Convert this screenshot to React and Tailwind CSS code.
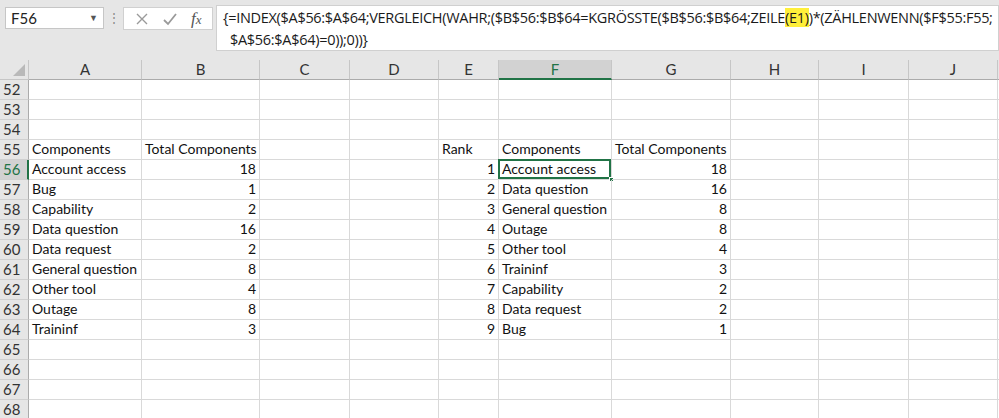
import React from 'react';

const cols = [
  { k: 'A', w: 'w-[113px]' },
  { k: 'B', w: 'w-[118px]' },
  { k: 'C', w: 'w-[90px]' },
  { k: 'D', w: 'w-[89px]' },
  { k: 'E', w: 'w-[60px]' },
  { k: 'F', w: 'w-[113px]' },
  { k: 'G', w: 'w-[119px]' },
  { k: 'H', w: 'w-[88px]' },
  { k: 'I', w: 'w-[90px]' },
  { k: 'J', w: 'w-[89px]' },
];

// cell values per row
const data = {
  55: { A: 'Components', B: 'Total Components', E: 'Rank', F: 'Components', G: 'Total Components' },
  56: { A: 'Account access', B: 18, E: 1, F: 'Account access', G: 18 },
  57: { A: 'Bug', B: 1, E: 2, F: 'Data question', G: 16 },
  58: { A: 'Capability', B: 2, E: 3, F: 'General question', G: 8 },
  59: { A: 'Data question', B: 16, E: 4, F: 'Outage', G: 8 },
  60: { A: 'Data request', B: 2, E: 5, F: 'Other tool', G: 4 },
  61: { A: 'General question', B: 8, E: 6, F: 'Traininf', G: 3 },
  62: { A: 'Other tool', B: 4, E: 7, F: 'Capability', G: 2 },
  63: { A: 'Outage', B: 8, E: 8, F: 'Data request', G: 2 },
  64: { A: 'Traininf', B: 3, E: 9, F: 'Bug', G: 1 },
};

const rows = Array.from({ length: 17 }, (_, i) => 52 + i);

const Cell = ({ col, row }) => {
  const v = data[row] && data[row][col.k];
  const isNum = typeof v === 'number';
  const active = col.k === 'F' && row === 56;
  return (
    <div
      className={`${col.w} shrink-0 h-[20px] border-r border-b border-[#d9d9d9] relative flex items-end pb-[1px] overflow-visible whitespace-nowrap ${isNum ? 'justify-end pr-[3px]' : 'pl-[3px]'}`}
    >
      {v !== undefined && <span className="leading-[18px]">{v}</span>}
      {active && (
        <>
          <div className="absolute -left-[1px] -top-[1px] w-[calc(100%+1px)] h-[calc(100%+1px)] border-2 border-[#217346]" />
          <div className="absolute -right-[3px] -bottom-[3px] w-[5px] h-[5px] bg-[#217346] border border-white" />
        </>
      )}
    </div>
  );
};

export default function App() {
  return (
    <div className="w-[999px] h-[418px] overflow-hidden bg-white text-[#111] font-['Lato','Liberation_Sans',sans-serif] text-[14px]">
      {/* formula bar area */}
      <div className="h-[60px] bg-[#e6e6e6] flex items-start pt-[5px] relative">
        <div className="mt-[2px] ml-[5px] w-[99px] h-[22px] bg-white border border-[#c6c6c6] flex items-center justify-between px-[5px] text-[15px] text-[#222]">
          <span>F56</span>
          <span className="text-[9px] text-[#555]">▼</span>
        </div>
        <div className="w-[19px] h-[22px] mt-[2px] flex items-center justify-center text-[#888] text-[12px]">⋮</div>
        <div className="mt-[2px] w-[90px] h-[23px] bg-white border border-[#d0d0d0] flex items-center justify-around px-[4px]">
          <svg width="14" height="14" viewBox="0 0 14 14"><path d="M2 2 L12 12 M12 2 L2 12" stroke="#9a9a9a" strokeWidth="1.4" fill="none" /></svg>
          <svg width="16" height="14" viewBox="0 0 16 14"><path d="M2 8 L6 12 L14 2" stroke="#9a9a9a" strokeWidth="1.8" fill="none" /></svg>
          <span className="font-['Liberation_Serif',serif] italic text-[17px] text-[#555] leading-none">f<span className="text-[13px]">x</span></span>
        </div>
        <div className="ml-[3px] flex-1 h-[46px] bg-white border border-[#d0d0d0] pl-[6px] pt-[1px] text-[14.5px] leading-[22px] text-[#1a1a1a] whitespace-nowrap font-['Open_Sans','Liberation_Sans',sans-serif] tracking-[-0.3px]">
          <div>
            {'{=INDEX($A$56:$A$64;VERGLEICH(WAHR;($B$56:$B$64=KGRÖSSTE($B$56:$B$64;ZEILE'}
            <span className="bg-[#ffef3a]">(E1)</span>
            {')*(ZÄHLENWENN($F$55:F55;'}
          </div>
          <div className="pl-[7px]">{' $A$56:$A$64)=0));0))}'}</div>
        </div>
      </div>

      {/* column headers */}
      <div className="flex h-[20px] bg-[#e6e6e6] text-[#333] text-[15px]">
        <div className="w-[29px] shrink-0 border-r border-b border-[#c6c6c6] relative overflow-hidden">
          <div className="absolute right-[3px] bottom-[3px] w-0 h-0 border-l-[12px] border-l-transparent border-b-[12px] border-b-[#b9b9b9]" />
        </div>
        {cols.map((c) => (
          <div
            key={c.k}
            className={`${c.w} shrink-0 flex items-center justify-center border-r border-[#c6c6c6] ${c.k === 'F' ? 'bg-[#d2d2d2] text-[#217346] border-b-2 border-b-[#217346]' : 'border-b border-b-[#ababab]'}`}
          >
            {c.k}
          </div>
        ))}
        <div className="flex-1 border-b border-[#ababab]" />
      </div>

      {/* rows */}
      {rows.map((r) => (
        <div key={r} className="flex h-[20px]">
          <div
            className={`w-[29px] shrink-0 flex items-center pl-[3px] text-[15px] border-b border-[#d0d0d0] ${r === 56 ? 'bg-[#d2d2d2] text-[#217346] border-r-2 border-r-[#217346]' : 'bg-[#e6e6e6] text-[#333] border-r border-r-[#ababab]'}`}
          >
            {r}
          </div>
          {cols.map((c) => (
            <Cell key={c.k} col={c} row={r} />
          ))}
          <div className="flex-1 border-b border-[#d9d9d9]" />
        </div>
      ))}
    </div>
  );
}
